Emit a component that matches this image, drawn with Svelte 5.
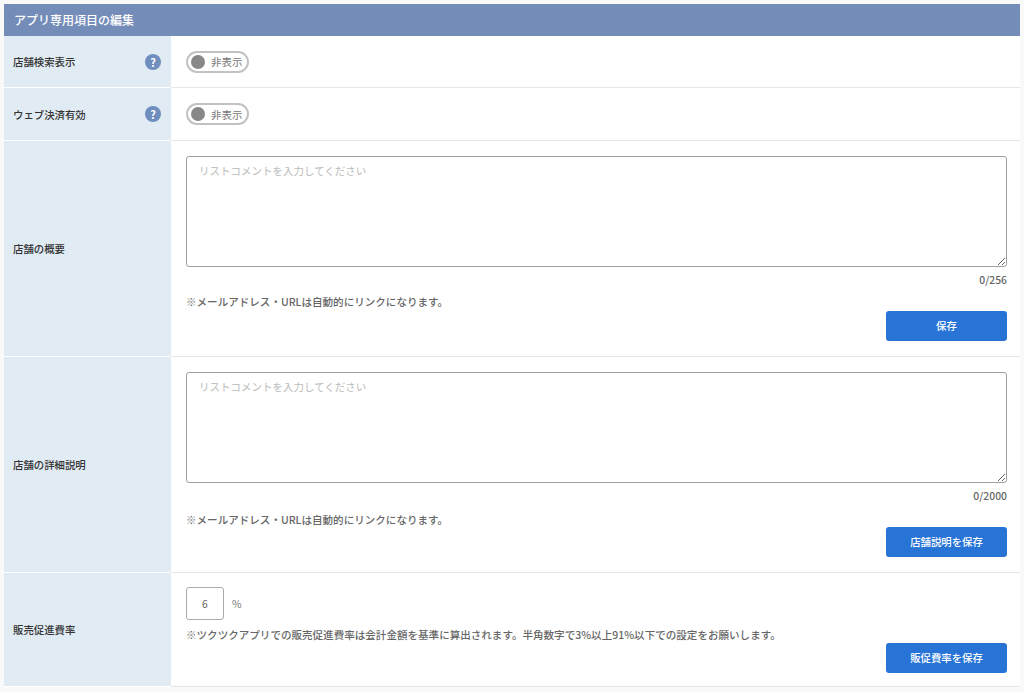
<script>
  let rows = [
    { label: "店舗の概要", count: "0/256", btn: "保存", long: false },
    { label: "店舗の詳細説明", count: "0/2000", btn: "店舗説明を保存", long: true }
  ];
</script>

<div class="panel">
  <div class="title">アプリ専用項目の編集</div>

  {#each ["店舗検索表示", "ウェブ決済有効"] as label}
    <div class="row toggle-row">
      <div class="head">
        <span>{label}</span>
        <span class="help">?</span>
      </div>
      <div class="body">
        <div class="toggle"><i></i><span>非表示</span></div>
      </div>
    </div>
  {/each}

  {#each rows as r}
    <div class="row">
      <div class="head"><span>{r.label}</span></div>
      <div class="body text-body" class:long={r.long}>
        <textarea placeholder="リストコメントを入力してください"></textarea>
        <div class="count">{r.count}</div>
        <p class="note">※メールアドレス・URLは自動的にリンクになります。</p>
        <div class="actions"><button>{r.btn}</button></div>
      </div>
    </div>
  {/each}

  <div class="row">
    <div class="head"><span>販売促進費率</span></div>
    <div class="body rate-body">
      <div class="rate"><input value="6" /><span>%</span></div>
      <p class="note">※ツクツクアプリでの販売促進費率は会計金額を基準に算出されます。半角数字で3%以上91%以下での設定をお願いします。</p>
      <div class="actions"><button>販促費率を保存</button></div>
    </div>
  </div>
</div>

<style>
  :global(body) {
    background: #f9f9f9;
    font-family: "Noto Sans CJK JP", "Noto Sans", sans-serif;
    color: #333;
  }

  .panel {
    margin: 4px 4px 0;
    background: #fff;
  }

  .title {
    height: 32px;
    line-height: 31px;
    padding-left: 10px;
    background: #748cb8;
    color: #fff;
    font-size: 12px;
    font-weight: 500;
  }

  .row {
    display: flex;
    border-bottom: 1px solid #e6e6e6;
  }

  .head {
    width: 167px;
    flex-shrink: 0;
    box-sizing: border-box;
    display: flex;
    align-items: center;
    justify-content: space-between;
    padding: 0 10px 0 9px;
    background: #e1ebf4;
    border-bottom: 1px solid #fff;
    margin-bottom: -1px;
    font-size: 10.4px;
    font-weight: 500;
  }

  .help {
    width: 16px;
    height: 16px;
    border-radius: 50%;
    background: #6f8dbd;
    color: #fff;
    font-size: 11px;
    font-weight: 700;
    line-height: 16px;
    text-align: center;
  }

  .body {
    flex: 1;
    box-sizing: border-box;
    padding: 0 13px 0 15px;
    min-width: 0;
  }

  .toggle-row {
    height: 51.45px;
  }

  .toggle-row .body {
    display: flex;
    align-items: center;
  }

  .toggle {
    width: 63px;
    height: 22px;
    box-sizing: border-box;
    border: 2px solid #c2c2c2;
    border-radius: 11px;
    display: flex;
    align-items: center;
    gap: 6px;
    padding-left: 3px;
    font-size: 10.5px;
    color: #777;
  }

  .toggle i {
    width: 14px;
    height: 14px;
    border-radius: 50%;
    background: #888;
  }

  .text-body {
    padding-top: 15px;
    height: 215px;
  }

  textarea {
    display: block;
    width: 100%;
    height: 111px;
    box-sizing: border-box;
    border: 1px solid #a0a0a0;
    border-radius: 3px;
    padding: 6px 12px;
    font: 400 10.5px "Noto Sans CJK JP", sans-serif;
    outline: none;
  }

  textarea::placeholder {
    color: #bbb;
  }

  .count {
    text-align: right;
    font-size: 10.4px;
    font-weight: 500;
    color: #666;
    line-height: 14px;
    margin-top: 6px;
  }

  .note {
    margin: 8px 0 0;
    font-size: 10.55px;
    font-weight: 500;
    color: #666;
    line-height: 14px;
  }

  .long .note {
    margin-top: 10px;
  }

  .actions {
    display: flex;
    justify-content: flex-end;
    margin-top: 2px;
  }

  .long .actions {
    margin-top: 0;
  }

  button {
    width: 121px;
    height: 30px;
    border: 0;
    border-radius: 3px;
    background: #2874d6;
    color: #fff;
    font: 500 10.4px "Noto Sans CJK JP", sans-serif;
  }

  .rate-body {
    padding-top: 14px;
    height: 113px;
  }

  .rate {
    display: flex;
    align-items: center;
    gap: 8px;
    font-size: 10.4px;
    color: #777;
  }

  .rate input {
    width: 38px;
    height: 33px;
    box-sizing: border-box;
    border: 1px solid #aaa;
    border-radius: 3px;
    text-align: center;
    font: 400 10.4px "Noto Sans CJK JP", sans-serif;
    color: #666;
  }

  .rate-body .note {
    margin-top: 8px;
  }

  .rate-body .actions {
    margin-top: 1px;
  }
</style>
